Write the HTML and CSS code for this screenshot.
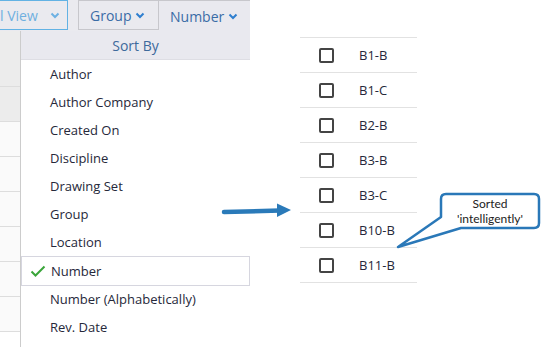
FILE: index.html
```html
<!DOCTYPE html>
<html lang="en">
<head>
    <meta charset="UTF-8">
    <title>Sort By</title>
    <link rel="stylesheet" href="styles.css">
</head>
<body>
    <div id="page">
        <div id="left-pane">
            <div class="toolbar">
                <div class="tb-btn view-btn">l View
                    <svg class="chev" width="10" height="7" viewBox="0 0 10 7"><polyline points="1.5,1.5 5,5 8.5,1.5"/></svg>
                </div>
                <div class="tb-btn group-btn">Group
                    <svg class="chev" width="10" height="7" viewBox="0 0 10 7"><polyline points="1.5,1.5 5,5 8.5,1.5"/></svg>
                </div>
                <div class="tb-btn number-btn">Number
                    <svg class="chev" width="10" height="7" viewBox="0 0 10 7"><polyline points="1.5,1.5 5,5 8.5,1.5"/></svg>
                </div>
            </div>
            <div class="below">
                <div class="side">
                    <div class="side-row head"></div>
                    <div class="side-row grey"></div>
                    <div class="side-row"></div>
                    <div class="side-row"></div>
                    <div class="side-row"></div>
                    <div class="side-row"></div>
                    <div class="side-row"></div>
                    <div class="side-row"></div>
                </div>
                <div class="menu">
                    <div class="menu_head">Sort By</div>
                    <div class="menu_item">Author</div>
                    <div class="menu_item">Author Company</div>
                    <div class="menu_item">Created On</div>
                    <div class="menu_item">Discipline</div>
                    <div class="menu_item">Drawing Set</div>
                    <div class="menu_item">Group</div>
                    <div class="menu_item">Location</div>
                    <div class="menu_item selected">
                        <svg class="check" width="16" height="12" viewBox="0 0 16 12"><polyline points="1.5,6.5 5.5,10.5 14.5,1.5"/></svg>
                        Number
                    </div>
                    <div class="menu_item">Number (Alphabetically)</div>
                    <div class="menu_item">Rev. Date</div>
                </div>
            </div>
        </div>
        <div id="right-pane">
            <div class="sheet-list">
                <div class="sheet-row"><span class="box"></span>B1-B</div>
                <div class="sheet-row"><span class="box"></span>B1-C</div>
                <div class="sheet-row"><span class="box"></span>B2-B</div>
                <div class="sheet-row"><span class="box"></span>B3-B</div>
                <div class="sheet-row"><span class="box"></span>B3-C</div>
                <div class="sheet-row"><span class="box"></span>B10-B</div>
                <div class="sheet-row"><span class="box"></span>B11-B</div>
            </div>
        </div>

        <!-- annotations drawn over the screenshot -->
        <svg class="overlay" width="543" height="347" viewBox="0 0 543 347">
            <line x1="224" y1="212" x2="280" y2="210.5" stroke="#2a7ab9" stroke-width="4.5" stroke-linecap="round"/>
            <polygon points="277,203.5 291,210 277,217" fill="#2a7ab9"/>
            <path d="M 446 194 H 534 Q 539 194 539 199 V 223 Q 539 228 534 228 H 461 L 398 247 L 441 217 V 199 Q 441 194 446 194 Z"
                  fill="#fff" stroke="#2a78b8" stroke-width="2.5" stroke-linejoin="round"/>
        </svg>
        <div class="callout_text">
            <div>Sorted</div>
            <div>'intelligently'</div>
        </div>
    </div>
</body>
</html>
```

FILE: styles.css
```css
body{
    margin:0; padding:0;
    background:#fff;
    font-family: "Open Sans", "DejaVu Sans", sans-serif;
}
#page{
    position: relative;
    width:543px; height:347px;
    overflow: hidden;
    display: flex;
    flex-direction: row;
}
#left-pane{
    width:250px;
    display: flex;
    flex-direction: column;
}
.toolbar{
    display: flex;
    flex-direction: row;
    height:31px;
    background-color: #eaeaef;
}
.tb-btn{
    display: flex;
    align-items: center;
    box-sizing: border-box;
    height:31px;
    font-size:14px;
    color:#3a6ca6;
}
.chev{
    margin-left:5px;
    fill:none;
    stroke:#2f7fcf;
    stroke-width:2;
}
.view-btn{
    width:68px;
    height:30px;
    border:1px solid #62b2e4;
    border-left:none;
    color:#6fb0e0;
    margin-right:10px;
}
.view-btn .chev{ margin-left:12px; stroke:#6db1e3; }
.group-btn{
    width:81px;
    height:30px;
    border:1px solid #c7c7cc;
    padding-left:11px;
}
.group-btn .chev{ margin-left:4px; }
.number-btn{
    flex:1;
    padding-left:11px;
    border-top:1px solid #c7c7cc;
    background-color:#e9e9ef;
}
.number-btn .chev{ margin-left:4px; }

.below{
    flex:1;
    display: flex;
    flex-direction: row;
}
.side{
    width:20px;
    border-right:1px solid #cccccc;
    display: flex;
    flex-direction: column;
}
.side-row{
    height:34px;
    border-bottom:1px solid #dddddd;
    background-color:#fafafa;
}
.side-row.head{ height:55px; background-color:#ececec; }
.side-row.grey{ background-color:#ececec; }

.menu{
    flex:1;
    display: flex;
    flex-direction: column;
}
.menu_head{
    height:28px;
    border-bottom:1px solid #dedee4;
    background-color:#e9e9ef;
    color:#3d6a9c;
    font-size:14px;
    display: flex;
    align-items: center;
    justify-content: center;
}
.menu_item{
    height:28px;
    box-sizing: border-box;
    display: flex;
    align-items: center;
    padding-left:29px;
    font-size:13px;
    color:#26283a;
}
.menu_item.selected{
    border:1px solid #d6d6df;
    padding-left:8px;
    height:30px;
    margin-bottom:-1px;
}
.check{
    margin-right:5px;
    fill:none;
    stroke:#3aa53a;
    stroke-width:2;
}

#right-pane{
    flex:1;
    padding-top:37px;
    padding-left:50px;
}
.sheet-list{
    width:117px;
    border-top:1px solid #e2e2e2;
}
.sheet-row{
    height:34px;
    border-bottom:1px solid #e2e2e2;
    display: flex;
    align-items: center;
    font-size:13px;
    color:#26283a;
}
.box{
    width:11px; height:11px;
    border:2px solid #444;
    border-radius:2px;
    margin-left:19px;
    margin-right:25px;
}

.overlay{
    position: absolute;
    left:0; top:0;
    pointer-events: none;
}
.callout_text{
    position: absolute;
    left:441px; top:196px;
    width:98px;
    text-align: center;
    font-family: Lato, "Liberation Sans", sans-serif;
    font-size:12px;
    line-height:15px;
    color:#222;
}
```
